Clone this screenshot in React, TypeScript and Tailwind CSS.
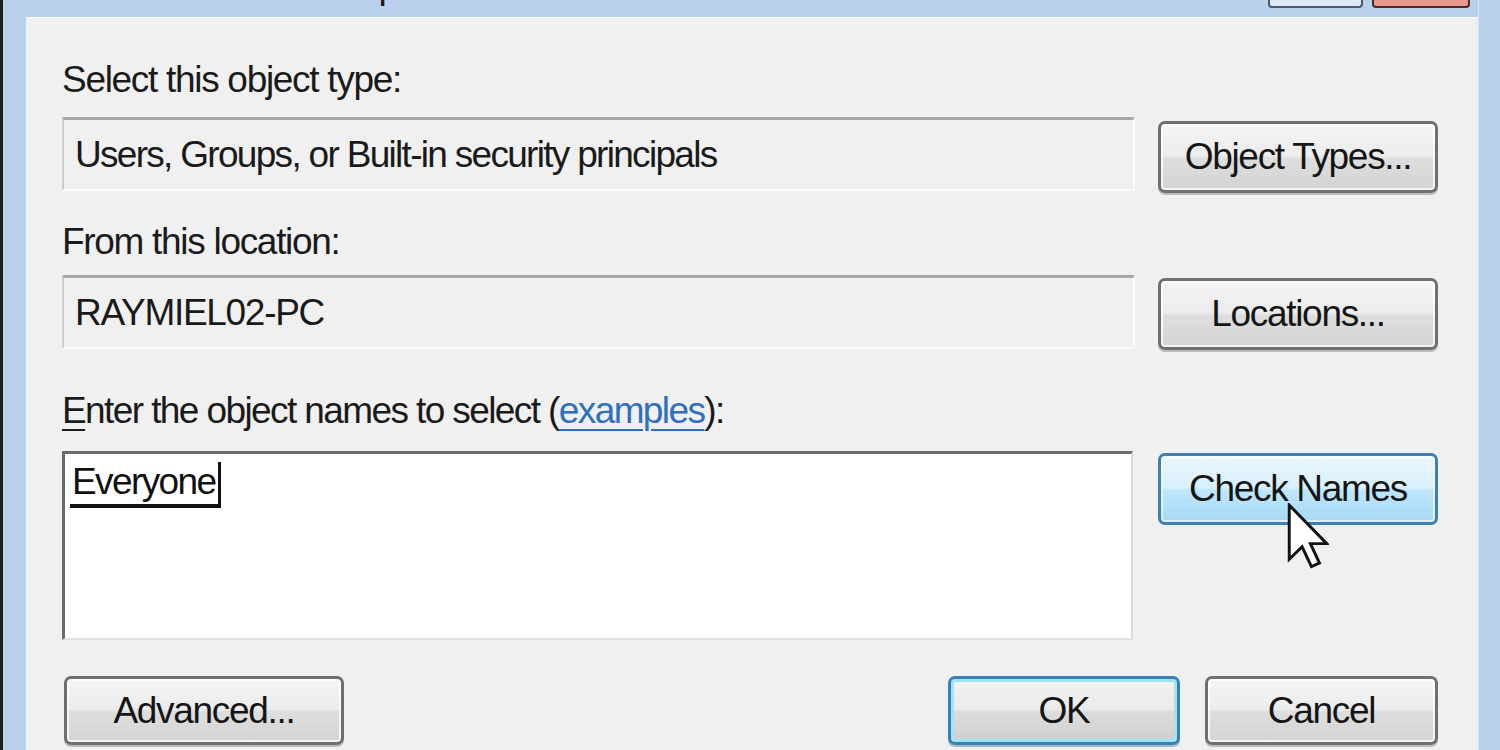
import React from 'react';

const font = { fontFamily: '"Liberation Sans", Arial, sans-serif' };

const btnBase =
  'flex items-center justify-center rounded-[7px] border-[3px] text-[37px] leading-[44px] tracking-[-1.3px] text-[#151515]';

const grayBtn =
  btnBase +
  ' border-[#6f6f6f] bg-[linear-gradient(to_bottom,#f4f4f4_0%,#ececec_48%,#dedede_52%,#d3d3d3_100%)] shadow-[inset_0_0_0_2px_rgba(255,255,255,0.75),0_2px_0_#bcbcbc]';

const hoverBtn =
  btnBase +
  ' border-[#3c7fb1] bg-[linear-gradient(to_bottom,#eaf6fd_0%,#d9f0fc_48%,#bee6fd_52%,#a7d9f5_100%)] shadow-[inset_0_0_0_2px_rgba(255,255,255,0.6)]';

const defaultBtn =
  btnBase +
  ' border-[#3c7fb1] bg-[linear-gradient(to_bottom,#f2f2f2_0%,#ebebeb_48%,#dddddd_52%,#cfcfcf_100%)] shadow-[inset_0_0_0_3px_#9fe3f7,0_2px_0_#9fb7c9]';

const readOnlyField =
  'flex-1 h-[74px] flex items-center pl-[11px] rounded-[2px] border-t-[3px] border-l-2 border-r-2 border-b-2 border-t-[#a6a6a6] border-l-[#cdcdcd] border-r-[#fafafa] border-b-[#fafafa] bg-[#f0f0f0] text-[37px] leading-[44px] text-[#1a1a1a] -mt-[2px] whitespace-nowrap';

const labelCls = 'text-[37px] leading-[44px] text-[#1a1a1a] whitespace-nowrap';

function Cursor() {
  return (
    <svg
      className="absolute left-[1287px] top-[503px]"
      width="42"
      height="66"
      viewBox="0 0 12 19"
    >
      <path
        d="M0.6 0.6 L0.6 16.2 L4.3 12.6 L7 18.3 L9.3 17.3 L6.7 11.7 L11.4 11.7 Z"
        fill="#ffffff"
        stroke="#111111"
        strokeWidth="0.85"
        strokeLinejoin="miter"
      />
    </svg>
  );
}

export default function App() {
  return (
    <div className="relative w-[1500px] h-[750px] overflow-hidden flex bg-[#b9d1ea]" style={font}>
      {/* left window frame */}
      <div className="w-[26px] h-full border-l-[3px] border-[#1c1c1c] bg-[#b9d1ea]" />

      <div className="flex-1 flex flex-col">
        {/* title strip, mostly scrolled out of view */}
        <div className="h-[17px] flex items-start overflow-hidden">
          <div className="pl-[33px] -mt-[36px] text-[37px] leading-[44px] tracking-[-1.3px] text-[#1a1a1a] whitespace-nowrap">
            Select Users or Groups
          </div>
          <div className="ml-auto flex items-start gap-[9px] pr-[8px]">
            <div className="w-[95px] h-[8px] rounded-b-[4px] border-x-2 border-b-2 border-[#4b5a70] bg-[#dfe9f4]" />
            <div className="w-[98px] h-[8px] rounded-b-[4px] border-x-2 border-b-2 border-[#4a2a2a] bg-[#e9998a]" />
          </div>
        </div>

        {/* dialog body */}
        <div className="flex-1 bg-[#f0f0f0] border-t border-[#fafcff] pl-[36px] pr-[40px] flex flex-col">
          <div className={labelCls + ' tracking-[-1.3px] mt-[40px]'}>Select this object type:</div>

          <div className="mt-[17px] flex items-start gap-[23px]">
            <div className={readOnlyField + ' tracking-[-1.7px]'}>Users, Groups, or Built-in security principals</div>
            <button className={grayBtn + ' w-[280px] h-[72px] mt-[2px]'}>Object Types...</button>
          </div>

          <div className={labelCls + ' tracking-[-1.3px] mt-[27px]'}>From this location:</div>

          <div className="mt-[13px] flex items-start gap-[23px]">
            <div className={readOnlyField + ' tracking-[-1.3px]'}>RAYMIEL02-PC</div>
            <button className={grayBtn + ' w-[280px] h-[72px] mt-[1px]'}>Locations...</button>
          </div>

          <div className={labelCls + ' tracking-[-1.6px] mt-[39px]'}>
            <span className="underline decoration-2 underline-offset-[6px]">E</span>nter the object names to select (
            <span className="text-[#2f6fbf] underline decoration-2 underline-offset-[6px]">examples</span>):
          </div>

          <div className="mt-[18px] flex items-start gap-[25px]">
            <div className="flex-1 h-[189px] bg-white border-t-[3px] border-l-[3px] border-r-2 border-b-2 border-t-[#6a6a6a] border-l-[#6a6a6a] border-r-[#dadada] border-b-[#e2e2e2] pl-[5px] pt-[6px]">
              <div className="flex items-end">
                <span className="text-[37px] leading-[44px] tracking-[-1.6px] text-[#111] border-b-[4px] border-[#111] pl-[2px] pr-[5px]">
                  Everyone
                </span>
                <span className="w-[3px] h-[46px] bg-[#111] -ml-[3px]" />
              </div>
            </div>
            <button className={hoverBtn + ' w-[280px] h-[72px] mt-[2px]'}>Check Names</button>
          </div>

          <div className="mt-[36px] flex items-start">
            <button className={grayBtn + ' w-[280px] h-[69px] ml-[2px]'}>Advanced...</button>
            <button className={defaultBtn + ' w-[232px] h-[69px] ml-auto'}>OK</button>
            <button className={grayBtn + ' w-[233px] h-[69px] ml-[25px]'}>Cancel</button>
          </div>
        </div>
      </div>

      {/* right window frame */}
      <div className="w-[22px] h-full bg-[#b9d1ea] border-l border-[#d5e3f2]" />

      <Cursor />
    </div>
  );
}
